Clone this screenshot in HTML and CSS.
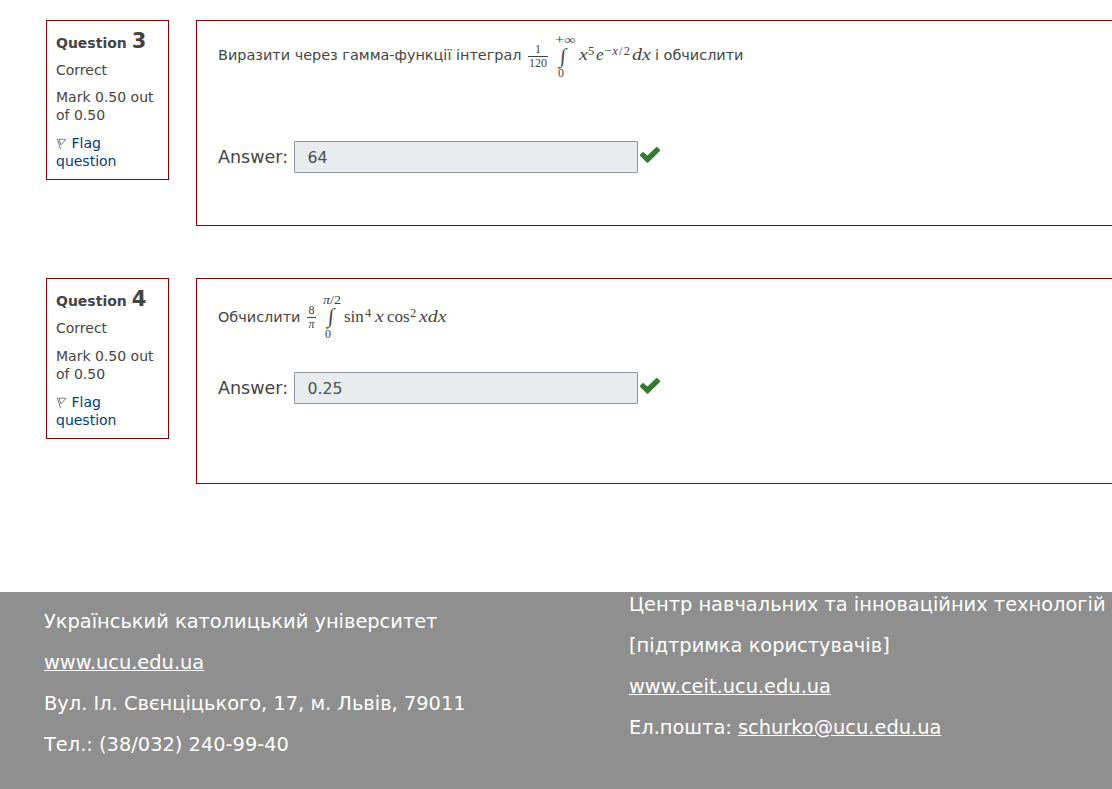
FILE: index.html
```html
<!DOCTYPE html>
<html lang="uk">
<head>
<meta charset="utf-8">
<title>Quiz review</title>
<link rel="stylesheet" href="styles.css">
</head>
<body>
<main class="questions">
  <section class="question">
    <aside class="info">
      <h3 class="number">Question <span class="digit">3</span></h3>
      <p class="state">Correct</p>
      <p class="grade">Mark 0.50 out of 0.50</p>
      <a class="flag"><svg class="flag-icon" width="11" height="13" viewBox="0 0 11 13"><path d="M1.2 1.5L4.6 12.3M3 2L4.8 8M3 2C5 2.8 6.5 1.6 9.8 2.6L5 7.8" /></svg> Flag question</a>
    </aside>
    <div class="content">
      <div class="text">
        <span class="words w-first">Виразити через гамма-функції інтеграл</span>
        <span class="frac f-first"><span>1</span><span class="den">120</span></span>
        <span class="integral i-first"><span class="upper infinity">+∞</span><span class="sign">∫</span><span class="lower">0</span></span>
        <span class="math m-first"><i class="var">x</i><sup class="n5">5</sup><i class="e">e</i><sup class="power">−<i>x</i>/2</sup><i class="dx">dx</i></span>
        <span class="words">і обчислити</span>
      </div>
      <div class="answer"><label>Answer:</label><span class="field">64</span><svg class="check" width="22" height="18" viewBox="0 0 22 18"><path d="M1.2 8.6L3.4 6.2Q4 5.6 4.6 6.2L8.4 9.6L17.1 1.3Q17.8.7 18.5 1.3L21 3.8Q21.5 4.5 20.9 5.1L9.3 16.4Q8.5 17.2 7.7 16.4L1.2 10Q.5 9.3 1.2 8.6Z"/></svg></div>
    </div>
  </section>
  <section class="question second">
    <aside class="info">
      <h3 class="number">Question <span class="digit">4</span></h3>
      <p class="state">Correct</p>
      <p class="grade">Mark 0.50 out of 0.50</p>
      <a class="flag"><svg class="flag-icon" width="11" height="13" viewBox="0 0 11 13"><path d="M1.2 1.5L4.6 12.3M3 2L4.8 8M3 2C5 2.8 6.5 1.6 9.8 2.6L5 7.8" /></svg> Flag question</a>
    </aside>
    <div class="content">
      <div class="text">
        <span class="words w-second">Обчислити</span>
        <span class="frac f-second"><span>8</span><span class="den"><i>π</i></span></span>
        <span class="integral i-second"><span class="upper"><i>π</i>/2</span><span class="sign">∫</span><span class="lower">0</span></span>
        <span class="math m-second"><span class="fn">sin</span><sup class="n4">4</sup><i class="var">x</i><span class="fn cos">cos</span><sup class="n2">2</sup><i class="xdx">xdx</i></span>
      </div>
      <div class="answer"><label>Answer:</label><span class="field">0.25</span><svg class="check" width="22" height="18" viewBox="0 0 22 18"><path d="M1.2 8.6L3.4 6.2Q4 5.6 4.6 6.2L8.4 9.6L17.1 1.3Q17.8.7 18.5 1.3L21 3.8Q21.5 4.5 20.9 5.1L9.3 16.4Q8.5 17.2 7.7 16.4L1.2 10Q.5 9.3 1.2 8.6Z"/></svg></div>
    </div>
  </section>
</main>
<footer class="footer">
  <div class="contacts university">
    <p>Український католицький університет</p>
    <p><a>www.ucu.edu.ua</a></p>
    <p>Вул. Іл. Свєнціцького, 17, м. Львів, 79011</p>
    <p>Тел.: (38/032) 240-99-40</p>
  </div>
  <div class="contacts center">
    <p>Центр навчальних та інноваційних технологій</p>
    <p>[підтримка користувачів]</p>
    <p><a>www.ceit.ucu.edu.ua</a></p>
    <p>Ел.пошта: <a>schurko@ucu.edu.ua</a></p>
  </div>
</footer>
</body>
</html>
```

FILE: styles.css
```css
* { box-sizing: border-box; }
body { margin: 0; overflow: hidden; background: #fff; color: #444; font: 14px/18px "DejaVu Sans", sans-serif; }
p, h3 { margin: 0; }
.questions { height: 592px; padding: 20px 0 0 46px; }
.question { display: flex; align-items: flex-start; gap: 27px; height: 206px; margin-bottom: 52px; }
.info { flex: none; width: 123px; height: 160px; padding: 9px; border: 1px solid #8b0000; }
.second .info { height: 161px; }
.number { height: 23px; padding-top: 1px; font-size: 14px; line-height: 25px; white-space: nowrap; }
.digit { font-size: 21px; line-height: 20px; }
.state { margin-top: 8px; }
.grade { margin-top: 9px; }
.second .grade { margin-top: 10px; }
.flag { display: block; margin-top: 10px; color: #003d7d; }
.flag-icon { vertical-align: -2px; fill: none; stroke: #777; stroke-width: 1; }
.content { flex: 1; height: 206px; padding-left: 21px; border: 1px solid #8b0000; border-right: 0; }
.text { display: flex; align-items: flex-start; height: 119px; padding-top: 14px; white-space: nowrap; }
.second .text { height: 92px; padding-top: 16px; }
.words { margin-top: 11px; font-size: 14.43px; }
.second .words { margin-top: 13px; }
.w-first { width: 310px; }
.w-second { width: 89px; }
.frac, .integral, .math { font-family: "Liberation Serif", serif; }
.frac { display: flex; flex-direction: column; width: 20px; margin-top: 9px; font-size: 12px; line-height: 11px; text-align: center; }
.second .frac { width: 9px; margin-top: 10px; }
.den { height: 13px; margin-top: 1px; padding-top: 1px; border-top: 1px solid #444; }
.integral { display: flex; flex-direction: column; width: 23px; margin-left: 7px; font-size: 12px; line-height: 10px; }
.i-second { width: 20px; margin-left: 7px; }
.upper { width: max-content; height: 10px; transform-origin: left; transform: scaleX(1.18); }
.infinity { transform: scaleX(1.36); }
.sign { width: 16px; height: 22px; padding-left: 5px; font: 21px/22px "Liberation Serif", serif; transform: skewX(-5deg); }
.lower { padding-left: 3px; line-height: 12px; }
.i-second .lower { padding-left: 2px; line-height: 14px; }
.math { display: flex; align-items: flex-start; margin-top: 10px; font-size: 17px; line-height: 20px; }
.m-first { width: 76px; margin-left: 1px; }
.m-second { margin-left: 1px; margin-top: 12px; }
.math sup { font-size: 12.5px; line-height: 12px; }
.var, .dx, .xdx { transform-origin: left; transform: scaleX(1.17); }
.var { width: 9px; }
.n5 { width: 8px; }
.e { width: 8px; }
.power { width: 28px; letter-spacing: 1.2px; }
.fn { width: 21px; }
.n4 { width: 10px; }
.cos { width: 23px; margin-left: 3px; }
.n2 { width: 9px; }
.answer { display: flex; align-items: flex-start; height: 34px; }
.answer label { width: 76px; margin-top: 8px; font-size: 17.5px; }
.field { width: 344px; height: 32px; margin-top: 1px; padding: 0 12.5px; border: 1px solid #8f959e; border-radius: 1px; background: #e9ecef; color: #495057; font-size: 15.75px; line-height: 31px; }
.check { margin: 6px 0 0 1px; fill: #357a32; }
.footer { display: flex; height: 197px; background: #8f8f8f; color: #fff; font-size: 19.4px; line-height: 29px; white-space: nowrap; overflow: hidden; }
.contacts p { margin-bottom: 12px; }
.contacts a { text-decoration: underline; }
.university { width: 629px; padding: 15px 0 0 44px; }
.center { margin-top: -2px; }
```
